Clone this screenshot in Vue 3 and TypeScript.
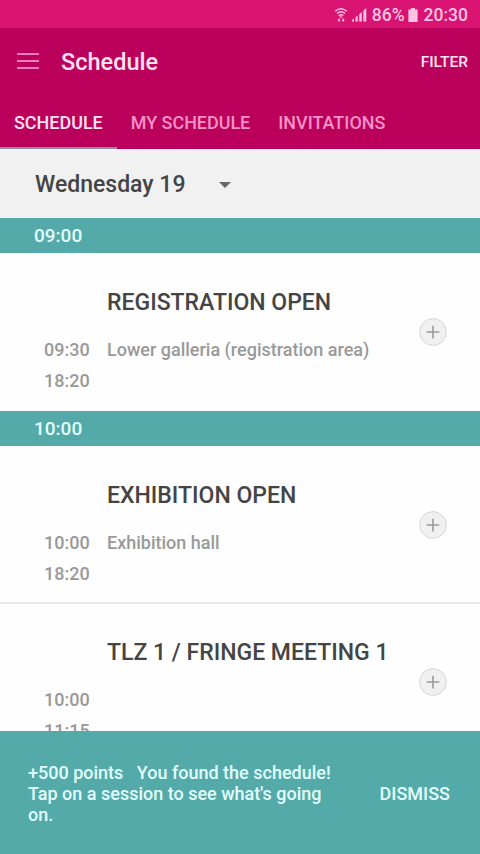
<template>
	<div class="screen">
		<div class="status-bar">
			<svg class="wifi" width="14" height="16" viewBox="0 0 14 16">
				<path d="M1.3 4.2Q7 -0.8 12.7 4.2M3 6.5Q7 3.1 11 6.5M4.8 8.7Q7 6.9 9.2 8.7" />
				<path class="solid" d="M5.4 9.4h3.2L7 11.2zM3.4 13.2L5 11.2l1.6 2H5.6v1.6H4.4v-1.6zM7.6 13H8.6v-1.6h1.2V13h1L9.2 15z" />
			</svg>
			<svg class="signal" width="15" height="15" viewBox="0 0 15 15">
				<path d="M0 14.5V13L2 11.6v2.9zM3.5 14.5V10.3L5.7 8.6v5.9zM7.2 14.5V7.2L9.8 5v9.5zM11.3 14.5V3.6L14.3 1v13.5z" />
			</svg>
			<span class="percent">86%</span>
			<svg class="battery" width="10" height="14" viewBox="0 0 10 14">
				<path d="M3 0h4v1.6h2.6V14H.4V1.6H3z" />
			</svg>
			<span class="clock">20:30</span>
		</div>

		<header class="toolbar">
			<button class="menu" aria-label="Menu">
				<span></span>
				<span></span>
				<span></span>
			</button>
			<h1>Schedule</h1>
			<button class="filter">FILTER</button>
		</header>

		<nav class="tabs">
			<button
				v-for="tab in tabs"
				:key="tab"
				class="tab"
				:class="{ active: tab === activeTab }"
				@click="activeTab = tab"
			>
				{{ tab }}
			</button>
		</nav>

		<div class="day">
			<span>Wednesday 19</span>
			<svg width="12" height="6" viewBox="0 0 12 6"><path d="M0 0h12L6 6z" /></svg>
		</div>

		<main class="list">
			<section v-for="group in groups" :key="group.time">
				<div class="band">{{ group.time }}</div>
				<article v-for="session in group.sessions" :key="session.title" class="session">
					<div class="info">
						<h2>{{ session.title }}</h2>
						<div class="times">
							<div>{{ session.start }}</div>
							<div>{{ session.end }}</div>
						</div>
						<div class="place">{{ session.place }}</div>
					</div>
					<button class="add" aria-label="Add">
						<svg width="28" height="28" viewBox="0 0 28 28">
							<circle cx="14" cy="14" r="13.4" />
							<path d="M14 7.8v12.6M7.7 14h12.6" />
						</svg>
					</button>
				</article>
			</section>
		</main>

		<div v-if="showMessage" class="message">
			<p>+500 points&nbsp;&nbsp; You found the schedule! Tap on a session to see what's going on.</p>
			<button class="dismiss" @click="showMessage = false">DISMISS</button>
		</div>
	</div>
</template>

<script setup lang="ts">
import { ref } from "vue";

interface Session {
	title: string;
	start: string;
	end: string;
	place?: string;
}

interface Group {
	time: string;
	sessions: Session[];
}

const tabs = ["SCHEDULE", "MY SCHEDULE", "INVITATIONS"];
const activeTab = ref("SCHEDULE");
const showMessage = ref(true);

const groups: Group[] = [
	{
		time: "09:00",
		sessions: [
			{
				title: "REGISTRATION OPEN",
				start: "09:30",
				end: "18:20",
				place: "Lower galleria (registration area)",
			},
		],
	},
	{
		time: "10:00",
		sessions: [
			{ title: "EXHIBITION OPEN", start: "10:00", end: "18:20", place: "Exhibition hall" },
			{ title: "TLZ 1 / FRINGE MEETING 1", start: "10:00", end: "11:15" },
		],
	},
];
</script>

<style>
body {
	margin: 0;
}
</style>

<style scoped>
.screen {
	display: flex;
	flex-direction: column;
	height: 854px;
	overflow: hidden;
	background: #fefefe;
	font-family: Roboto, "Liberation Sans", sans-serif;
	font-weight: 500;
}

button {
	padding: 0;
	border: 0;
	background: none;
	color: inherit;
	font: inherit;
}

h1,
h2,
p {
	margin: 0;
	font-weight: 500;
}

.status-bar {
	display: flex;
	align-items: center;
	flex: none;
	box-sizing: border-box;
	height: 28px;
	padding: 1px 12px 0 0;
	justify-content: flex-end;
	background: #d81371;
	color: #ffc4e2;
	font-size: 17.5px;
}

.status-bar svg {
	fill: #ffc4e2;
}

.status-bar .wifi {
	fill: none;
	stroke: #ffc4e2;
	stroke-width: 1.4;
}

.wifi .solid {
	fill: #ffc4e2;
	stroke: none;
}

.signal {
	margin-left: 4px;
}

.percent {
	margin-left: 5px;
}

.battery {
	margin: 0 6px 0 3px;
}

.toolbar {
	display: flex;
	align-items: center;
	flex: none;
	height: 67px;
	padding: 0 12px 0 17px;
	background: #bb005c;
	color: #ffe3f3;
}

.menu {
	display: flex;
	flex-direction: column;
	gap: 5px;
	width: 22px;
	margin-right: 22px;
	padding-bottom: 2px;
}

.menu span {
	height: 2px;
	background: #ee7fb8;
}

.toolbar h1 {
	flex: 1;
	font-size: 23.5px;
	line-height: 28px;
}

.filter {
	font-size: 15.5px;
}

.tabs {
	display: flex;
	flex: none;
	height: 54px;
	background: #bb005c;
}

.tab {
	box-sizing: border-box;
	height: 54px;
	padding: 3px 14px 0;
	border-bottom: 2px solid transparent;
	color: #f592c7;
	font-size: 17.95px;
}

.tab.active {
	border-bottom-color: #8e8fa3;
	color: #ffe3f3;
}

.day {
	display: flex;
	align-items: center;
	flex: none;
	gap: 34px;
	box-sizing: border-box;
	height: 69px;
	padding: 2px 0 0 35px;
	background: #f1f1f1;
	color: #444;
	font-size: 23px;
}

.day svg {
	fill: #666;
}

.list {
	flex: 1;
	min-height: 0;
	overflow: hidden;
}

.band {
	height: 35px;
	padding-left: 34px;
	background: #53aaa9;
	color: #e2ffff;
	font-size: 19px;
	line-height: 36px;
}

.session {
	display: flex;
	align-items: center;
	box-sizing: border-box;
	height: 158px;
	padding: 0 33px 0 44px;
}

.session + .session {
	margin-top: -2px;
	border-top: 2px solid #e8e8e8;
}

.info {
	display: grid;
	grid-template-columns: 46px 1fr;
	column-gap: 17px;
	flex: 1;
	padding-top: 19px;
	color: #999;
	font-size: 18px;
	line-height: 31px;
}

.info h2 {
	grid-column: 2;
	margin-bottom: 16px;
	color: #444;
	font-size: 23px;
	line-height: 30px;
}

.add {
	width: 28px;
	height: 28px;
}

.add svg {
	display: block;
	fill: #f0f0f0;
	stroke: #d6d6d6;
}

.add path {
	stroke: #999;
	stroke-width: 1.6;
}

.message {
	display: flex;
	align-items: center;
	justify-content: space-between;
	flex: none;
	box-sizing: border-box;
	height: 123px;
	padding: 2px 30px 0 28px;
	background: #53aaa9;
	color: #e2ffff;
	font-size: 18px;
}

.message p {
	width: 310px;
	line-height: 21px;
}
</style>
